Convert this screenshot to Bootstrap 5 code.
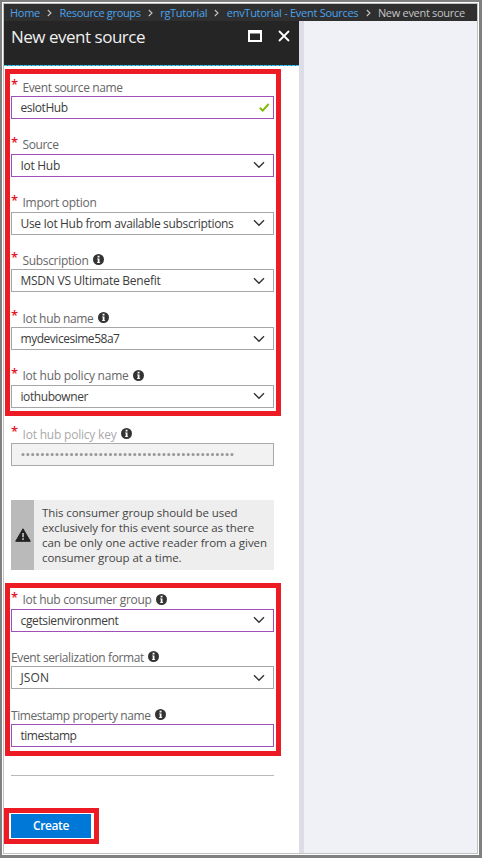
<!DOCTYPE html>
<html lang="en">
<head>
<meta charset="utf-8">
<meta name="viewport" content="width=device-width, initial-scale=1">
<title>New event source</title>
<link href="https://cdn.jsdelivr.net/npm/bootstrap@5.3.0/dist/css/bootstrap.min.css" rel="stylesheet">
<style>
body{font-family:"Open Sans","Noto Sans",sans-serif;font-size:12px;line-height:15px;color:#3c3c3c;background:#808080;white-space:nowrap}
.frame{width:482px;height:858px;padding:2px 3px 3px 2px}
.window{border:1px solid #fff}
.window-inner{border:1px solid #c3c3c3}
.crumbs{height:17px;background:#2f2f30;font-size:11px;padding-left:6px;color:#c4c4c4}
.crumbs a{color:#4ba3ec}
.crumbs svg{margin:0 7.3px}
.blade{width:295px}
.rail{width:5px;background:#dcdde5}
.canvas{background:#f0f1f7}
.titlebar{height:45px;background:repeating-linear-gradient(90deg,#3cc3ee 0 3px,#257d9a 3px 4px) bottom/100% 1px no-repeat #252525;color:#fff;padding:5px 9px 0 7px}
.titlebar h1{font-size:17px;line-height:22px;color:#f0f0f0}
.callout-box{border:5px solid #ed1c24;width:276px;margin-left:1px;padding:0 2px 0 1px}
.box-a{margin-top:3px;height:347px}
.box-b{margin-top:13px;height:173px}
.box-b .field:first-child{margin-top:-1.4px}
.plain{padding:0 7px;width:277px}
.field{height:57.8px}
.field-key{margin-top:5px}
.lbl{height:22px;color:#666;padding-top:4px}
.lbl-muted{color:#aaa}
.req{color:#e81123;font-size:13px;font-weight:600;line-height:12px;width:11.5px;height:18px}
.lbl svg{margin-left:4px;margin-bottom:1px}
.control{height:23px;border:1px solid #a6a6a6;padding:0 8px 0 8.5px;background:#fff}
.control.edited{border-color:#a04fb8}
.control.locked{background:#f2f2f2;border-color:#aaa}
.tick{margin-right:-5px}
.notice{height:70px;background:#eee;margin-top:21.2px}
.notice-icon{width:23px;background:#bababa}
.notice p{padding:5px 0 0 8px;color:#444;font-size:11.5px}
.rule{height:1px;background:#b9b9b9;margin-top:19px}
.create-wrap{border:5px solid #ed1c24;width:95px;height:36px;margin-top:32px;padding:1px 3px 1px 2px}
.create-wrap .btn{background:#0078d7;font-size:12px;line-height:15px;font-weight:600;color:#fff}
</style>
<script src="https://cdn.jsdelivr.net/npm/bootstrap@5.3.0/dist/js/bootstrap.bundle.min.js"></script>
</head>
<body>
<svg class="d-none">
<symbol id="chev" viewBox="0 0 12 8"><path d="M1 1.2 6 6.2 11 1.2" fill="none" stroke="#333" stroke-width="1.4"/></symbol>
<symbol id="sep" viewBox="0 0 5 8"><path d="M.8 1 4 4 .8 7" fill="none" stroke="#c4c4c4" stroke-width="1.1"/></symbol>
<symbol id="info" viewBox="0 0 10 10"><circle cx="5" cy="5" r="5" fill="#333"/><path d="M4.2 1.7h1.7v1.4H4.2zM3.7 4h2.2v3.4h.6v.8H3.6v-.8h.7V4.8h-.6z" fill="#fff"/></symbol>
</svg>
<div class="frame d-flex">
<main class="window flex-grow-1 d-flex">
<div class="window-inner flex-grow-1 d-flex flex-column">
<nav class="crumbs d-flex align-items-center"><a class="text-decoration-none" href="#"><span class="fit" data-w="30">Home</span></a><svg width="5" height="8"><use href="#sep"/></svg><a class="text-decoration-none" href="#"><span class="fit" data-w="81">Resource groups</span></a><svg width="5" height="8"><use href="#sep"/></svg><a class="text-decoration-none" href="#"><span class="fit" data-w="47">rgTutorial</span></a><svg width="5" height="8"><use href="#sep"/></svg><a class="text-decoration-none" href="#"><span class="fit" data-w="131.5">envTutorial - Event Sources</span></a><svg width="5" height="8"><use href="#sep"/></svg><span class="fit" data-w="87">New event source</span></nav>
<div class="d-flex flex-grow-1">
<section class="blade bg-white">
<header class="titlebar d-flex align-items-start justify-content-between">
<h1 class="m-0 fw-normal"><span class="fit" data-w="134">New event source</span></h1>
<div class="d-flex pt-1">
<svg width="14" height="12" class="me-3"><path d="M1 1h12v10H1z" fill="none" stroke="#fff" stroke-width="2"/><path d="M1 2h12" stroke="#fff" stroke-width="3"/></svg>
<svg width="12" height="12"><path d="M1 1 11 11M11 1 1 11" stroke="#fff" stroke-width="1.8"/></svg>
</div>
</header>
<div class="callout-box box-a">
<div class="field"><div class="lbl d-flex align-items-center"><span class="req">*</span><span class="fit" data-w="100">Event source name</span></div><div class="control edited d-flex align-items-center justify-content-between"><span class="fit" data-w="47">esIotHub</span><svg width="11" height="9" class="tick"><path d="M.8 4.8 3.7 7.6 9.6 1" fill="none" stroke="#7fba00" stroke-width="1.9"/></svg></div></div>
<div class="field"><div class="lbl d-flex align-items-center"><span class="req">*</span><span class="fit" data-w="36">Source</span></div><div class="control edited d-flex align-items-center justify-content-between"><span class="fit" data-w="39.5">Iot Hub</span><svg width="12" height="8"><use href="#chev"/></svg></div></div>
<div class="field"><div class="lbl d-flex align-items-center"><span class="req">*</span><span class="fit" data-w="74">Import option</span></div><div class="control d-flex align-items-center justify-content-between"><span class="fit" data-w="213">Use Iot Hub from available subscriptions</span><svg width="12" height="8"><use href="#chev"/></svg></div></div>
<div class="field"><div class="lbl d-flex align-items-center"><span class="req">*</span><span class="fit" data-w="66">Subscription</span><svg width="11" height="11"><use href="#info"/></svg></div><div class="control d-flex align-items-center justify-content-between"><span class="fit" data-w="140">MSDN VS Ultimate Benefit</span><svg width="12" height="8"><use href="#chev"/></svg></div></div>
<div class="field"><div class="lbl d-flex align-items-center"><span class="req">*</span><span class="fit" data-w="71">Iot hub name</span><svg width="11" height="11"><use href="#info"/></svg></div><div class="control d-flex align-items-center justify-content-between"><span class="fit" data-w="99">mydevicesime58a7</span><svg width="12" height="8"><use href="#chev"/></svg></div></div>
<div class="field"><div class="lbl d-flex align-items-center"><span class="req">*</span><span class="fit" data-w="106">Iot hub policy name</span><svg width="11" height="11"><use href="#info"/></svg></div><div class="control d-flex align-items-center justify-content-between"><span class="fit" data-w="67.5">iothubowner</span><svg width="12" height="8"><use href="#chev"/></svg></div></div>
</div>
<div class="plain">
<div class="field field-key"><div class="lbl lbl-muted d-flex align-items-center"><span class="req">*</span><span class="fit" data-w="94">Iot hub policy key</span><svg width="11" height="11"><use href="#info"/></svg></div><div class="control locked d-flex align-items-center"><svg width="216" height="5"><path d="M2 2.5H215" stroke="#999" stroke-width="3.2" stroke-linecap="round" stroke-dasharray="0 4.86"/></svg></div></div>
<div class="notice d-flex"><div class="notice-icon d-flex align-items-center justify-content-center"><svg width="16" height="14"><path d="M8 .8 15.3 13.3H.7z" fill="#222" stroke="#222" stroke-linejoin="round"/><path d="M7.2 5h1.7v4.3H7.2zM7.2 10.3h1.7v1.6H7.2z" fill="#bababa"/></svg></div>
<p class="m-0"><span class="fit" data-w="195.5">This consumer group should be used</span><br><span class="fit" data-w="212">exclusively for this event source as there</span><br><span class="fit" data-w="225">can be only one active reader from a given</span><br><span class="fit" data-w="139.5">consumer group at a time.</span></p></div>
</div>
<div class="callout-box box-b">
<div class="field"><div class="lbl d-flex align-items-center"><span class="req">*</span><span class="fit" data-w="129">Iot hub consumer group</span><svg width="11" height="11"><use href="#info"/></svg></div><div class="control edited d-flex align-items-center justify-content-between"><span class="fit" data-w="98">cgetsienvironment</span><svg width="12" height="8"><use href="#chev"/></svg></div></div>
<div class="field"><div class="lbl d-flex align-items-center"><span class="fit" data-w="133">Event serialization format</span><svg width="11" height="11"><use href="#info"/></svg></div><div class="control d-flex align-items-center justify-content-between"><span class="fit" data-w="28.5">JSON</span><svg width="12" height="8"><use href="#chev"/></svg></div></div>
<div class="field"><div class="lbl d-flex align-items-center"><span class="fit" data-w="139.5">Timestamp property name</span><svg width="11" height="11"><use href="#info"/></svg></div><div class="control edited d-flex align-items-center"><span class="fit" data-w="56">timestamp</span></div></div>
</div>
<div class="plain"><div class="rule"></div></div>
<div class="create-wrap d-flex"><button class="btn rounded-0 border-0 p-0 w-100"><span class="fit" data-w="36">Create</span></button></div>
</section>
<div class="rail"></div>
<div class="canvas flex-grow-1"></div>
</div>
</div>
</main>
</div>
<script>
document.querySelectorAll('.fit').forEach(e=>{const w=e.getBoundingClientRect().width;e.style.letterSpacing=((+e.dataset.w-w)/e.textContent.length)+'px'});
</script>
</body>
</html>
